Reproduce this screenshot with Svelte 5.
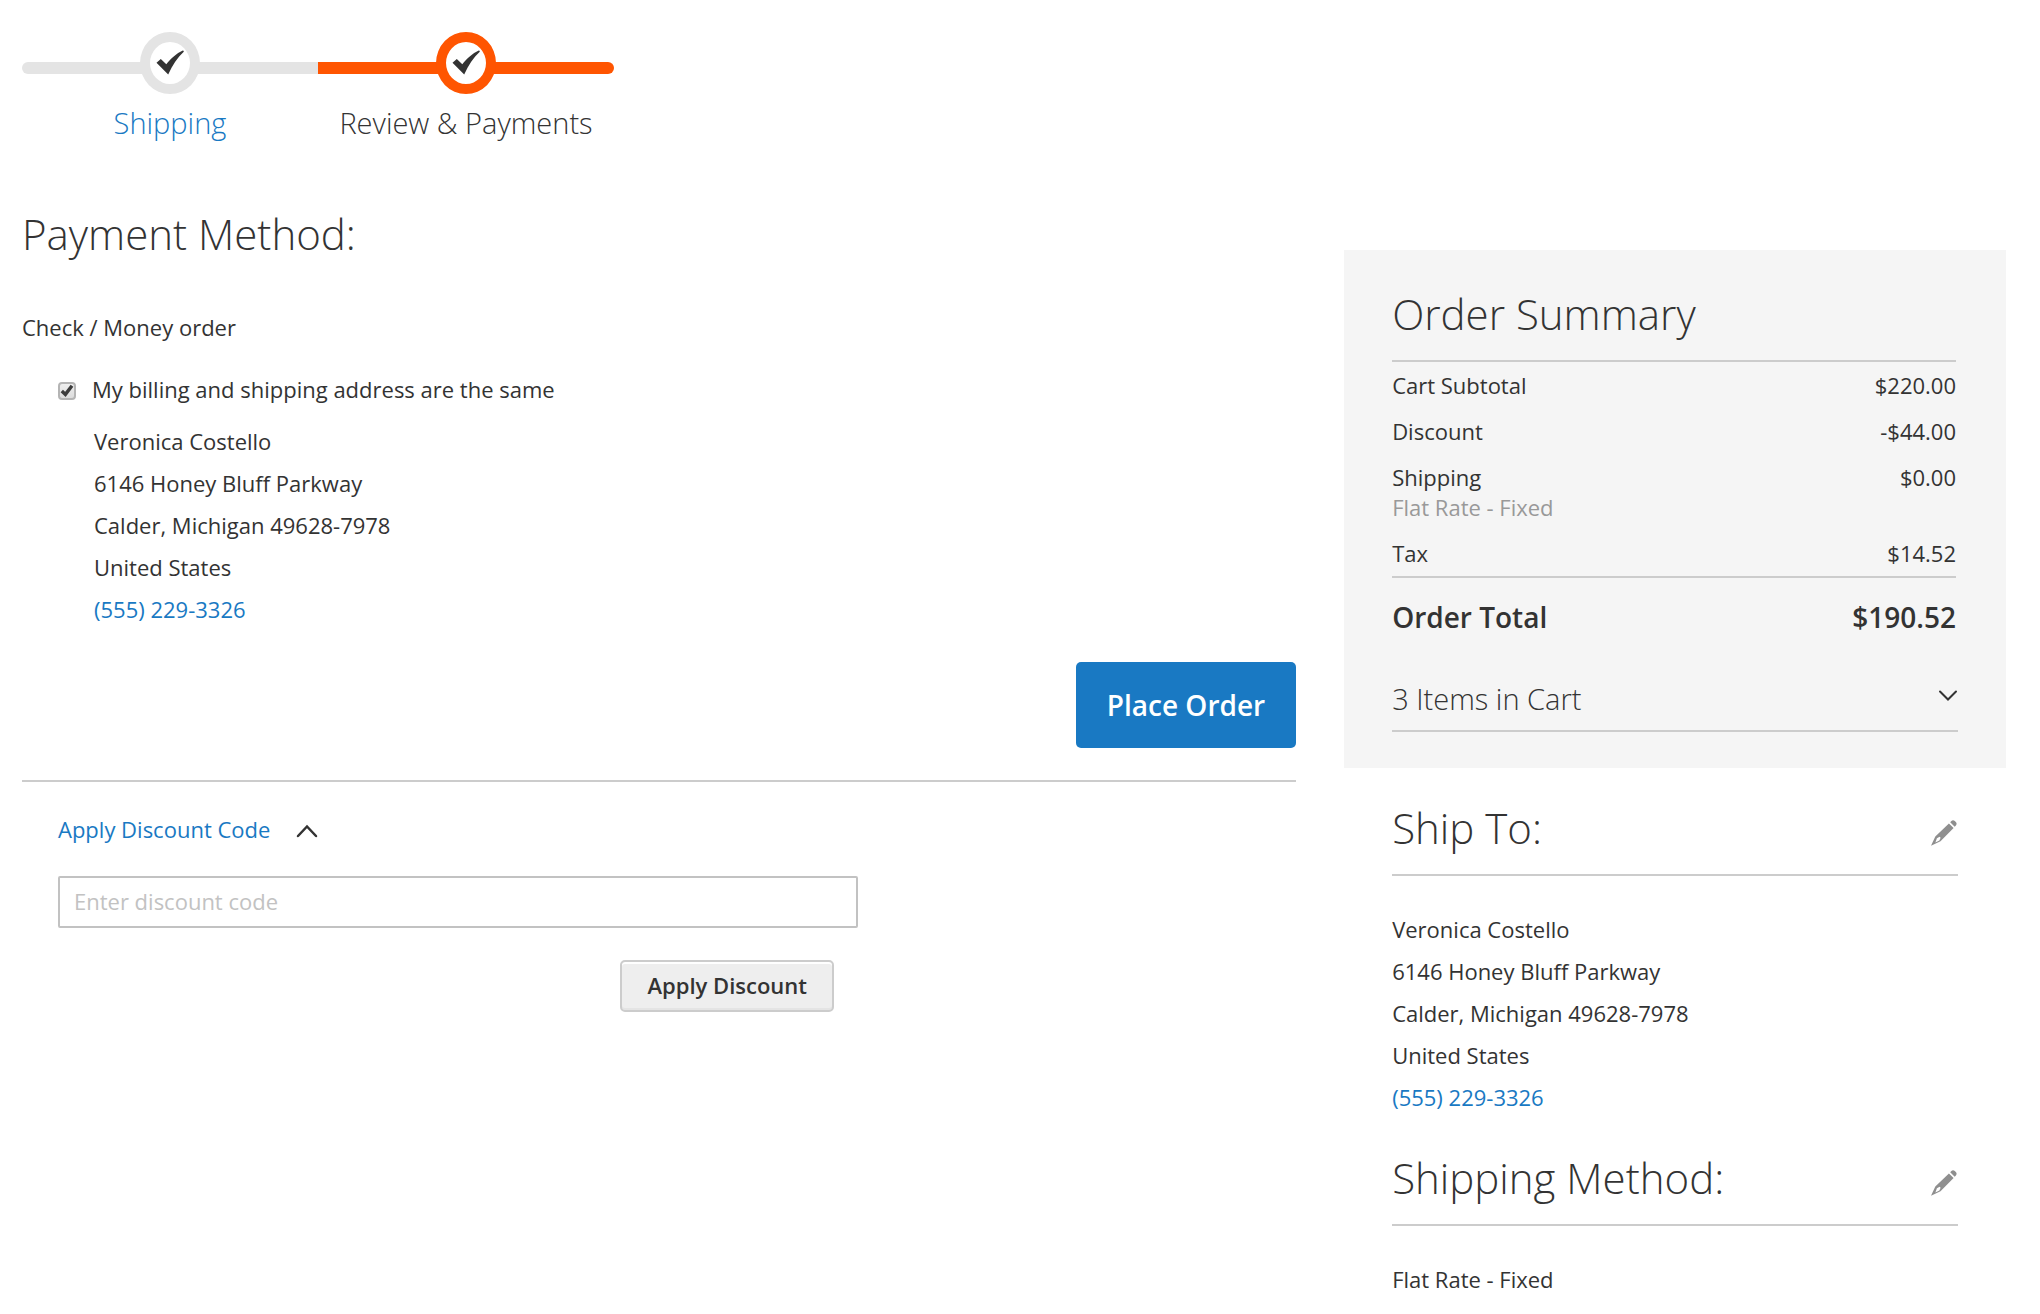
<script lang="ts">
  type Step = {
    label: string;
    href?: string;
    active: boolean;
  };

  type TotalRow = {
    label: string;
    note?: string;
    amount: string;
  };

  const steps: Step[] = [
    { label: 'Shipping', href: '#shipping', active: false },
    { label: 'Review & Payments', active: true }
  ];

  const address = {
    lines: ['Veronica Costello', '6146 Honey Bluff Parkway', 'Calder, Michigan 49628-7978', 'United States'],
    phone: '(555) 229-3326'
  };

  const totals: TotalRow[] = [
    { label: 'Cart Subtotal', amount: '$220.00' },
    { label: 'Discount', amount: '-$44.00' },
    { label: 'Shipping', note: 'Flat Rate - Fixed', amount: '$0.00' },
    { label: 'Tax', amount: '$14.52' }
  ];

  let sameAddress = $state(true);
  let discountOpen = $state(true);
  let discountCode = $state('');
</script>

{#snippet addressBlock()}
  <address class="address">
    {#each address.lines as line}
      <span>{line}</span>
    {/each}
    <a href="tel:5552293326">{address.phone}</a>
  </address>
{/snippet}

{#snippet editButton(label: string)}
  <button type="button" class="icon-btn" aria-label={label}>
    <svg width="26" height="26" viewBox="0 0 26 26" fill="#8f8f8f">
      <path d="M19.2 2.2l1.2-1.2c1-1 2.4-.9 3.4.1l1 1c1 1 1.1 2.4.1 3.4l-1.2 1.2z" />
      <path fill-rule="evenodd" d="M17.9 3.4l4.7 4.6L9.5 21.2 0 25.8 4.3 16.5zM5.9 18.3l-1.5 4.1 4-1.8 1.2-2.8-1-1z" />
    </svg>
  </button>
{/snippet}

<div class="checkout">
  <ol class="progress">
    {#each steps as step}
      <li class="step" class:active={step.active}>
        <span class="marker">
          <svg width="28" height="26" viewBox="0 0 28 26" fill="#333">
            <path d="M0.5 12.8L4.8 9.1 10.3 14.2C14.5 9 20.5 3.5 26.8.6c1 .2 1.3.8.7 1.5C21.5 7.8 16.5 15 12.2 24.6z" />
          </svg>
        </span>
        {#if step.href}
          <a class="step-label" href={step.href}>{step.label}</a>
        {:else}
          <span class="step-label">{step.label}</span>
        {/if}
      </li>
    {/each}
  </ol>

  <div class="columns">
    <main>
      <h1 class="title">Payment Method:</h1>
      <p class="method">Check / Money order</p>

      <div class="billing">
        <label class="same-address">
          <span class="check">
            <input type="checkbox" bind:checked={sameAddress} />
            {#if sameAddress}
              <svg width="18" height="18" viewBox="0 0 18 18" fill="none" stroke="#3c3c3c" stroke-width="3.4">
                <path d="M3.8 9l3.6 3.4L14 3.8" />
              </svg>
            {/if}
          </span>
          My billing and shipping address are the same
        </label>
        <div class="billing-address">
          {@render addressBlock()}
        </div>
      </div>

      <div class="actions">
        <button type="button" class="primary">Place Order</button>
      </div>

      <section class="discount">
        <button type="button" class="toggle" aria-expanded={discountOpen} onclick={() => (discountOpen = !discountOpen)}>
          Apply Discount Code
          <svg class:closed={!discountOpen} width="22" height="20" viewBox="0 0 22 20" fill="none" stroke="#333" stroke-width="2.5" stroke-linecap="round">
            <path d="M2 17L11 7.500l9 9.500" />
          </svg>
        </button>
        {#if discountOpen}
          <form class="discount-form" onsubmit={(e) => e.preventDefault()}>
            <input type="text" aria-label="Enter discount code" placeholder="Enter discount code" bind:value={discountCode} />
            <button type="submit" class="secondary">Apply Discount</button>
          </form>
        {/if}
      </section>
    </main>

    <aside>
      <section class="summary">
        <div class="totals">
          <h2 class="title ruled">Order Summary</h2>
          <table>
            <tbody>
              {#each totals as row}
                <tr>
                  <th scope="row">
                    {row.label}
                    {#if row.note}<span class="note">{row.note}</span>{/if}
                  </th>
                  <td>{row.amount}</td>
                </tr>
              {/each}
            </tbody>
            <tfoot>
              <tr>
                <th scope="row">Order Total</th>
                <td>$190.52</td>
              </tr>
            </tfoot>
          </table>
        </div>
        <button type="button" class="items">
          3 Items in Cart
          <svg width="20" height="20" viewBox="0 0 20 20" fill="none" stroke="#333" stroke-width="2" stroke-linecap="round">
            <path d="M2 2.5l8 8 8-8" />
          </svg>
        </button>
      </section>

      <section class="info">
        <div class="info-head ruled">
          <h2 class="title">Ship To:</h2>
          {@render editButton('Edit shipping address')}
        </div>
        {@render addressBlock()}
      </section>

      <section class="info">
        <div class="info-head ruled">
          <h2 class="title">Shipping Method:</h2>
          {@render editButton('Edit shipping method')}
        </div>
        <p class="carrier">Flat Rate - Fixed</p>
      </section>
    </aside>
  </div>
</div>

<style>
  :global(body) {
    background: #fff;
  }

  .checkout {
    padding: 32px 34px 16px 22px;
    font-family: 'Open Sans', 'Noto Sans', sans-serif;
    font-size: 22px;
    line-height: 30px;
    color: #333;
  }

  a {
    color: #1979c3;
    text-decoration: none;
  }

  p {
    margin: 0;
  }

  button {
    padding: 0;
    border: 0;
    background: none;
    font: inherit;
    color: inherit;
    cursor: pointer;
  }

  svg {
    display: block;
    flex: none;
  }

  /* Progress bar */
  .progress {
    display: flex;
    margin: 0 0 62px;
    padding: 0;
    list-style: none;
  }

  .step {
    --step-color: #e4e4e4;
    position: relative;
    display: flex;
    flex-direction: column;
    align-items: center;
    gap: 10px;
    width: 296px;
  }

  .step.active {
    --step-color: #ff5501;
  }

  .step::before {
    content: '';
    position: absolute;
    top: 30px;
    left: 0;
    right: 0;
    height: 12px;
    background: var(--step-color);
  }

  .step:first-child::before {
    border-radius: 6px 0 0 6px;
  }

  .step:last-child::before {
    border-radius: 0 6px 6px 0;
  }

  .marker {
    position: relative;
    display: flex;
    align-items: center;
    justify-content: center;
    box-sizing: border-box;
    width: 60px;
    height: 62px;
    border: 10px solid var(--step-color);
    border-radius: 50%;
    background: #fff;
  }

  .step-label {
    font-size: 29px;
    font-weight: 300;
    line-height: 38px;
    white-space: nowrap;
  }

  /* Layout */
  .columns {
    display: grid;
    grid-template-columns: minmax(0, 1fr) 33.36%;
    gap: 48px;
    align-items: start;
  }

  .title {
    margin: 0;
    font-size: 42px;
    font-weight: 300;
    line-height: 60px;
  }

  .ruled {
    padding-bottom: 16px;
    border-bottom: 2px solid #ccc;
  }

  .address {
    display: flex;
    flex-direction: column;
    align-items: flex-start;
    font-style: normal;
    line-height: 42px;
  }

  /* Payment */
  .method {
    margin-top: 48px;
  }

  .billing {
    padding: 32px 0 0 36px;
  }

  .same-address {
    display: flex;
    align-items: center;
    gap: 16px;
  }

  .check {
    position: relative;
    width: 18px;
    height: 18px;
    margin-top: 3px;
  }

  .check input {
    display: block;
    appearance: none;
    box-sizing: border-box;
    width: 18px;
    height: 18px;
    margin: 0;
    border: 2px solid #b4b4b4;
    border-radius: 4px;
    background: linear-gradient(#eee, #dcdcdc);
  }

  .check svg {
    position: absolute;
    top: 0;
    left: 0;
    pointer-events: none;
  }

  .billing-address {
    padding: 16px 0 0 36px;
  }

  .actions {
    display: flex;
    justify-content: flex-end;
    padding: 32px 0;
    border-bottom: 2px solid #ccc;
  }

  .primary {
    padding: 24px 31px;
    border-radius: 5px;
    background: #1979c3;
    color: #fff;
    font-size: 28px;
    font-weight: 600;
    line-height: 38px;
  }

  /* Discount code */
  .discount {
    padding: 32px 36px;
  }

  .toggle {
    display: flex;
    align-items: center;
    gap: 26px;
    color: #1979c3;
  }

  .toggle .closed {
    transform: rotate(180deg);
  }

  .discount-form {
    display: flex;
    flex-direction: column;
    gap: 32px;
    max-width: 800px;
    margin-top: 32px;
  }

  .discount-form input {
    box-sizing: border-box;
    width: 100%;
    height: 52px;
    padding: 0 14px 2px;
    border: 2px solid #c2c2c2;
    border-radius: 2px;
    font: inherit;
    color: inherit;
  }

  .discount-form input::placeholder {
    color: #c2c2c2;
    opacity: 1;
  }

  .secondary {
    align-self: flex-end;
    margin-right: 24px;
    padding: 8px 25px 10px;
    border: 2px solid #ccc;
    border-radius: 5px;
    background: #eee;
    box-shadow: inset 0 2px 0 #fff, inset 0 -2px 0 #e4e4e4;
    font-weight: 600;
  }

  /* Sidebar */
  aside {
    margin-top: 46px;
  }

  .summary {
    padding: 34px 48px 36px;
    background: #f5f5f5;
  }

  .totals {
    margin-right: 2px;
  }

  table {
    width: 100%;
    border-spacing: 0;
  }

  th,
  td {
    padding: 8px 0;
    font-weight: 400;
    text-align: left;
    vertical-align: top;
  }

  td {
    text-align: right;
  }

  .note {
    display: block;
    color: #999;
  }

  tfoot th,
  tfoot td {
    padding: 20px 0 0;
    border-top: 2px solid #ccc;
    font-size: 28px;
    font-weight: 600;
    line-height: 38px;
  }

  .items {
    display: flex;
    align-items: center;
    justify-content: space-between;
    width: 100%;
    margin-top: 44px;
    padding-bottom: 12px;
    border-bottom: 2px solid #ccc;
    font-size: 29px;
    font-weight: 300;
    line-height: 38px;
  }

  .info {
    padding: 30px 48px 0;
  }

  .info-head {
    display: flex;
    align-items: center;
    justify-content: space-between;
    margin-bottom: 32px;
  }

  .icon-btn {
    padding: 14px 1px 4px;
  }

  .carrier {
    line-height: 42px;
  }
</style>
